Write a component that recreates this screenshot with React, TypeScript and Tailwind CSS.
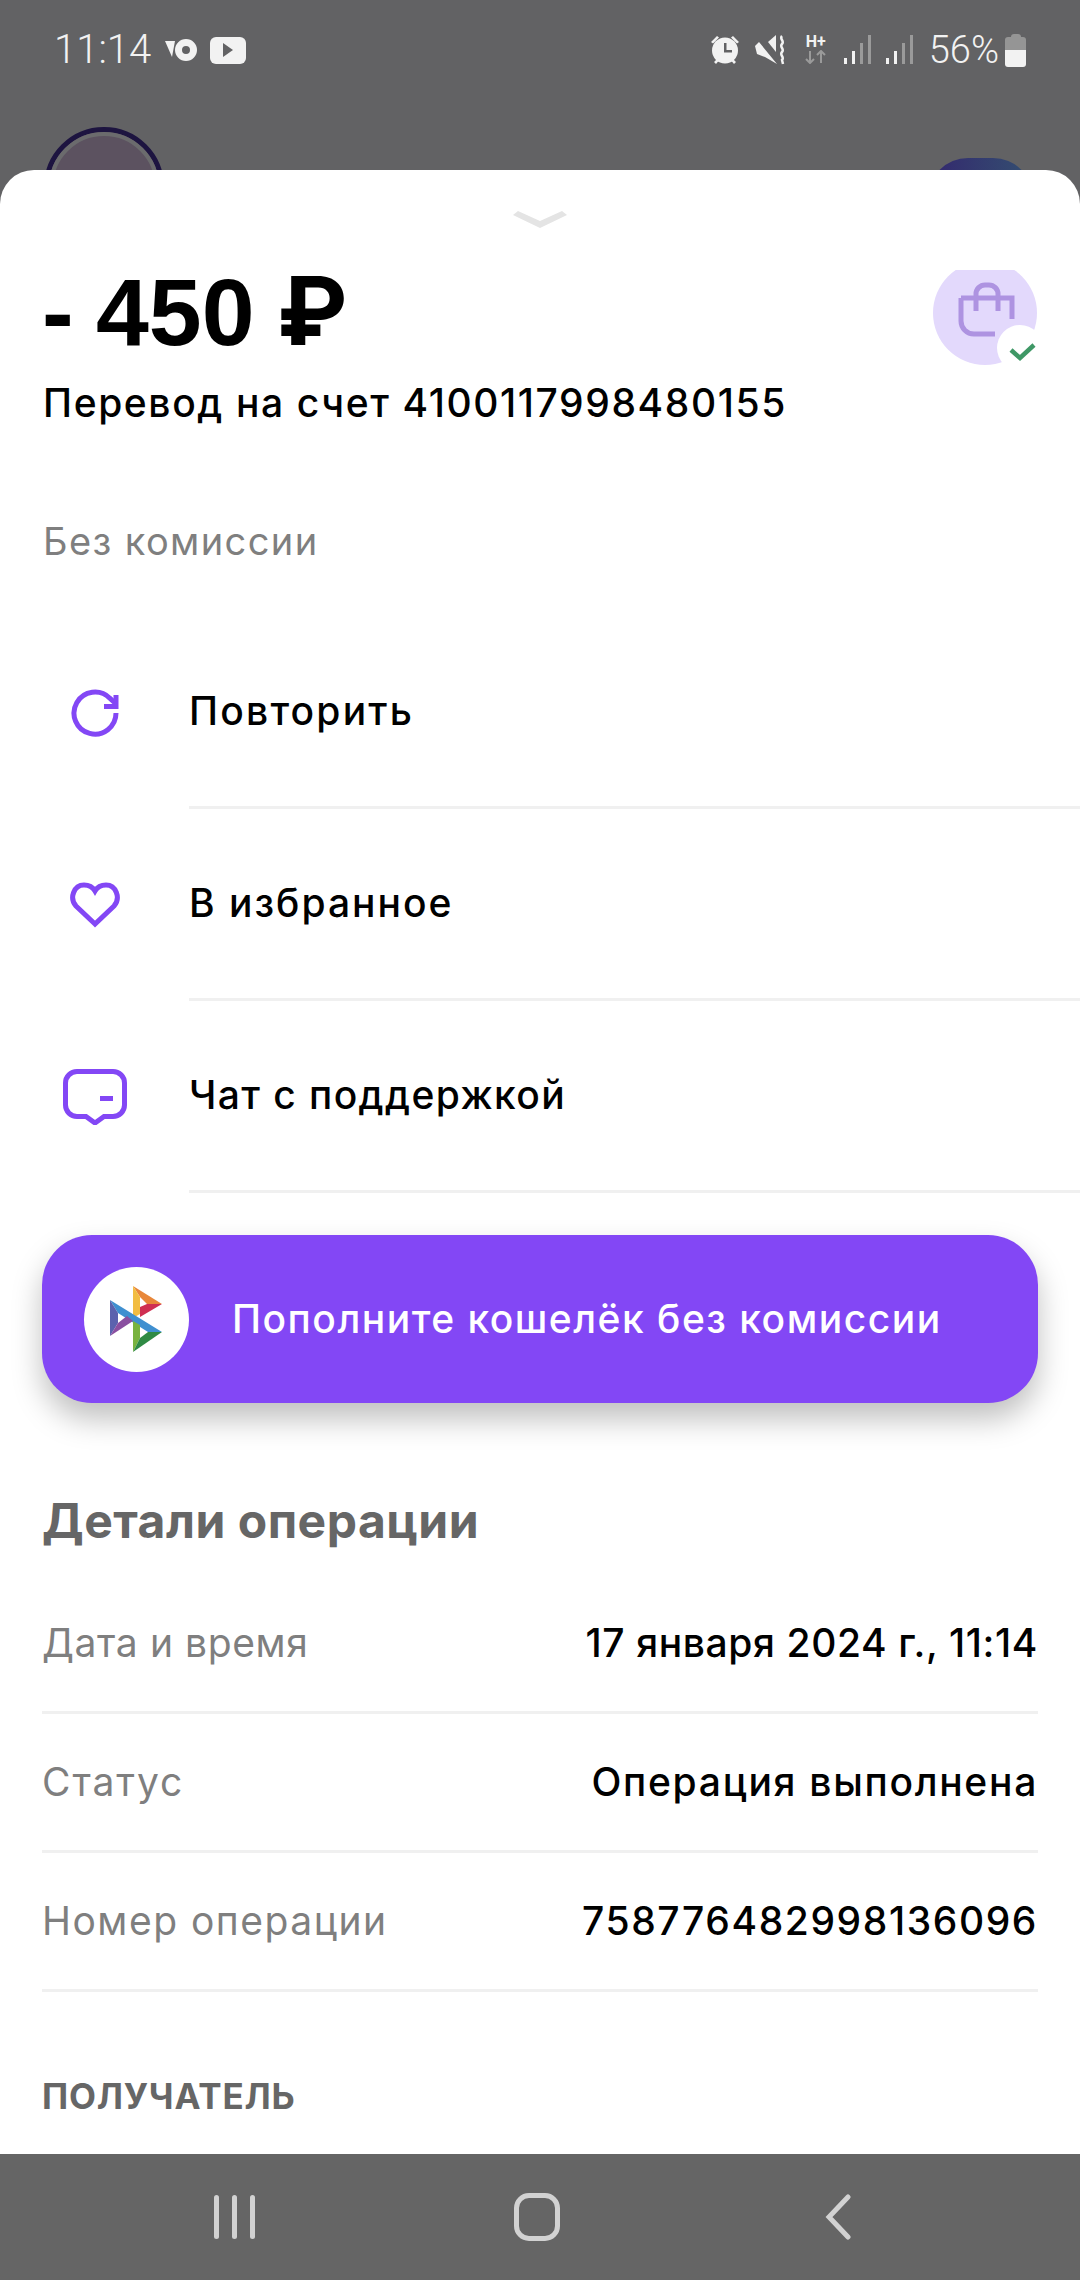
const font = { fontFamily: 'Inter, "Noto Sans", sans-serif' };

const detailRows = [
  { label: 'Дата и время', value: '17 января 2024 г., 11:14', labelClass: 'tracking-[0.6px]', valueClass: 'tracking-[0.6px]' },
  { label: 'Статус', value: 'Операция выполнена', labelClass: 'tracking-[1.9px]', valueClass: 'tracking-[1.7px]' },
  { label: 'Номер операции', value: '758776482998136096', labelClass: 'tracking-[1.5px]', valueClass: 'tracking-[1.6px]' },
];

function RepeatIcon() {
  return (
    <svg width="50" height="50" viewBox="0 0 50 50" fill="none" stroke="#8347f5" strokeWidth="5">
      <path d="M46 25a21 21 0 1 1-6.200-14.800L45 15" />
      <path d="M46 7v11.500H34" />
    </svg>
  );
}

function HeartIcon() {
  return (
    <svg width="50" height="46" viewBox="0 0 50 46" fill="none" stroke="#8347f5" strokeWidth="5">
      <path d="M25 42 6 24C-1 16 4 3 14 3c5 0 9 2.500 11 6 2-3.500 6-6 11-6 10 0 15 13 8 21z" />
    </svg>
  );
}

function ChatIcon() {
  return (
    <svg width="64" height="56" viewBox="0 0 64 56" fill="none">
      <path d="M14 2.500h36A11.500 11.500 0 0 1 61.500 14v22A11.500 11.500 0 0 1 50 47.500H41L32 54l-9-6.500h-9A11.500 11.500 0 0 1 2.500 36V14A11.500 11.500 0 0 1 14 2.500z" stroke="#8347f5" strokeWidth="5" />
      <rect x="37" y="27" width="13" height="5" fill="#8347f5" />
    </svg>
  );
}

function BagBadge() {
  return (
    <svg width="106" height="96" viewBox="0 0 106 96" fill="none">
      <circle cx="52" cy="43" r="52" fill="#e3d9fc" />
      <circle cx="87" cy="78" r="23" fill="#fff" />
      <path d="M28 28h51v21M28 28v23a13 13 0 0 0 13 13h21" stroke="#ae93e1" strokeWidth="5" />
      <path d="M43 41V24a9 9 0 0 1 9-9h4a9 9 0 0 1 9 9v17" stroke="#ae93e1" strokeWidth="5" />
      <path d="M78 80l9 8 14-13" stroke="#3f9866" strokeWidth="4.500" />
    </svg>
  );
}

function PayLogo() {
  return (
    <svg width="54" height="66" viewBox="0 0 54 66">
      <path d="M23 0 52 18H37L30 11z" fill="#e8873a" />
      <path d="M23 0v32l7-4V11z" fill="#f2bd42" />
      <path d="M52 18 30 31V21l7-3z" fill="#cf2f52" />
      <path d="M0 14 52 46H38L8 27z" fill="#3f8fd0" />
      <path d="M0 14v36l8-13V27z" fill="#5b62ae" />
      <path d="M0 50 23 35l-6-5-9 7z" fill="#8a4fa0" />
      <path d="M23 35v31l7-14V39z" fill="#79b33f" />
      <path d="M23 66 52 46H38l-8 6z" fill="#2f8a44" />
    </svg>
  );
}

function SignalIcon({ className }: { className: string }) {
  return (
    <svg className={className} width="28" height="30" viewBox="0 0 28 30">
      <rect x="0" y="23" width="3" height="6" fill="#f2f2f2" />
      <rect x="8" y="16" width="3" height="13" fill="#f2f2f2" />
      <rect x="16" y="8" width="3" height="21" fill="#9a9a9a" />
      <rect x="24" y="0" width="3" height="29" fill="#9a9a9a" />
    </svg>
  );
}

function StatusIcons() {
  return (
    <div className="flex items-center">
      <svg width="30" height="30" viewBox="0 0 30 30" fill="#f2f2f2">
        <circle cx="15" cy="15.500" r="13" />
        <path d="M1 7l6-6 2 1.500-6 6zM29 7l-6-6-2 1.500 6 6zM4 27l3-3 2 1.500-3 3.500zM26 27l-3-3-2 1.500 3 3.500z" />
        <path d="M14 8h2.500v7H22v2.500h-8z" fill="#626264" />
      </svg>
      <svg className="ml-[15px]" width="30" height="30" viewBox="0 0 30 30" fill="#f2f2f2">
        <path d="M13 7l8-7v17z" />
        <path d="M0 11l4-4 18 22-12-7-8-3z" />
        <path d="M27 1c-3 3 3 5 0 8s3 5 0 8 3 5 0 8l1 4" fill="none" stroke="#f2f2f2" strokeWidth="2.500" />
      </svg>
      <div className="ml-[20px] flex h-[32px] w-[22px] flex-col items-center">
        <span className="text-[16px] font-bold leading-[16px] text-[#f2f2f2]" style={{ fontFamily: 'Roboto, sans-serif' }}>H+</span>
        <svg width="22" height="14" viewBox="0 0 22 14" fill="none" stroke="#9a9a9a" strokeWidth="2">
          <path d="M5 1v12M1 9l4 4 4-4M16 13V1M12 5l4-4 4 4" />
        </svg>
      </div>
      <SignalIcon className="ml-[17px]" />
      <SignalIcon className="ml-[14px]" />
      <span className="ml-[15px] text-[38px] font-light leading-none text-[#f2f2f2]" style={{ fontFamily: 'Roboto, sans-serif' }}>56%</span>
      <div className="ml-[6px] flex h-[33px] w-[21px] flex-col items-center">
        <div className="h-[3px] w-[10px] rounded-t-sm bg-[#959595]" />
        <div className="h-[13px] w-full rounded-t-[3px] bg-[#959595]" />
        <div className="h-[17px] w-full rounded-b-[3px] bg-[#f2f2f2]" />
      </div>
    </div>
  );
}

function ActionRow({ icon, label, labelClass }: { icon: React.ReactNode; label: string; labelClass: string }) {
  return (
    <div className="flex h-[192px] items-center">
      <div className="flex w-[189px] justify-center">{icon}</div>
      <div className="flex h-full flex-1 items-center border-b-[3px] border-[#f0f0f0]">
        <span className={`text-[39px] font-medium text-black ${labelClass}`}>{label}</span>
      </div>
    </div>
  );
}

export default function App() {
  return (
    <div className="flex h-[2280px] w-[1080px] flex-col overflow-hidden bg-[#626264]" style={font}>
      {/* Status bar + dimmed screen behind the sheet */}
      <div className="relative h-[170px] shrink-0">
        <div className="flex h-[100px] items-center justify-between pl-[54px] pr-[54px]">
          <div className="flex items-center">
            <span className="text-[40px] font-light leading-none text-[#f2f2f2]" style={{ fontFamily: 'Roboto, sans-serif' }}>11:14</span>
            <svg className="ml-[14px]" width="32" height="24" viewBox="0 0 32 24" fill="#f2f2f2">
              <path d="M0 3h10l-3 16z" />
              <path fillRule="evenodd" d="M21 1a11 11 0 1 1 0 22 11 11 0 0 1 0-22zm0 7a4 4 0 1 0 0 8 4 4 0 0 0 0-8z" />
            </svg>
            <div className="ml-[13px] flex h-[27px] w-[36px] items-center justify-center rounded-[6px] bg-[#f2f2f2]">
              <div className="h-0 w-0 border-y-[7px] border-l-[10px] border-y-transparent border-l-[#626264]" />
            </div>
          </div>
          <StatusIcons />
        </div>
        <div className="absolute left-[44px] top-[127px] h-[120px] w-[120px] rounded-full border-[5px] border-[#1d1440] bg-[#5c5260]">
          <div className="h-full w-full rounded-full border-[4px] border-[#6b6b6d]" />
        </div>
        <div className="absolute left-[928px] top-[158px] h-[60px] w-[105px] rounded-t-[40px] bg-gradient-to-r from-[#33266e] to-[#334f70]" />
      </div>

      {/* Bottom sheet */}
      <div className="relative z-10 flex-1 overflow-hidden rounded-t-[34px] bg-white">
        <div className="flex h-[58px] items-end justify-center">
          <svg width="54" height="17" viewBox="0 0 54 17" fill="#e4e4e4">
            <path d="M0 4 5 0l22 10L49 0l5 4-27 13z" />
          </svg>
        </div>

        <div className="relative h-[200px] pt-[34px]">
          <div className="pl-[42px] text-[95px] font-bold leading-[100px] text-black [word-spacing:-4px]" style={{ fontFamily: '"Liberation Sans", Inter, sans-serif' }}>- 450 ₽</div>
          <div className="mt-[16px] pl-[43px] text-[39px] font-medium leading-[50px] tracking-[1.6px] text-black">Перевод на счет 4100117998480155</div>
          <div className="absolute right-[41px] top-[42px]">
            <BagBadge />
          </div>
        </div>

        <div className="mt-[88px] pl-[43px] text-[38px] leading-[50px] tracking-[1.4px] text-[#7f7f7f]">Без комиссии</div>

        <div className="mt-[51px]">
          <ActionRow icon={<RepeatIcon />} label="Повторить" labelClass="tracking-[2.2px]" />
          <ActionRow icon={<HeartIcon />} label="В избранное" labelClass="tracking-[2px]" />
          <ActionRow icon={<ChatIcon />} label="Чат с поддержкой" labelClass="tracking-[1.4px]" />
        </div>

        <div className="mx-[42px] mt-[42px] flex h-[168px] items-center rounded-[50px] bg-[#8347f5] pl-[42px] shadow-[0_16px_30px_rgba(0,0,0,0.25)]">
          <div className="flex h-[105px] w-[105px] items-center justify-center rounded-full bg-white">
            <PayLogo />
          </div>
          <span className="ml-[43px] text-[39px] font-medium tracking-[1.5px] text-white">Пополните кошелёк без комиссии</span>
        </div>

        <div className="mt-[88px] pl-[42px] text-[48px] font-bold leading-[60px] tracking-[0.5px] text-[#666666]">Детали операции</div>

        <div className="mx-[42px] mt-[24px]">
          {detailRows.map(row => (
            <div key={row.label} className="flex h-[139px] items-center justify-between border-b-[3px] border-[#f0f0f0]">
              <span className={`text-[39px] text-[#7f7f7f] ${row.labelClass}`}>{row.label}</span>
              <span className={`text-[39px] font-medium text-black ${row.valueClass}`}>{row.value}</span>
            </div>
          ))}
        </div>

        <div className="mt-[84px] pl-[42px] text-[35px] font-bold leading-[40px] tracking-[0.8px] text-[#666666]">ПОЛУЧАТЕЛЬ</div>
      </div>

      {/* Navigation bar */}
      <div className="flex h-[126px] shrink-0 items-center bg-[#656565]">
        <div className="flex w-full items-center justify-between pl-[214px] pr-[228px]">
          <div className="flex gap-[13px]">
            <div className="h-[44px] w-[5px] rounded-full bg-[#d2d2d2]" />
            <div className="h-[44px] w-[5px] rounded-full bg-[#d2d2d2]" />
            <div className="h-[44px] w-[5px] rounded-full bg-[#d2d2d2]" />
          </div>
          <div className="mr-[6px] h-[48px] w-[46px] rounded-[15px] border-[5px] border-[#d2d2d2]" />
          <svg width="28" height="46" viewBox="0 0 28 46" fill="none" stroke="#d2d2d2" strokeWidth="5" strokeLinecap="round">
            <path d="M24 3 5 23l19 20" />
          </svg>
        </div>
      </div>
    </div>
  );
}
